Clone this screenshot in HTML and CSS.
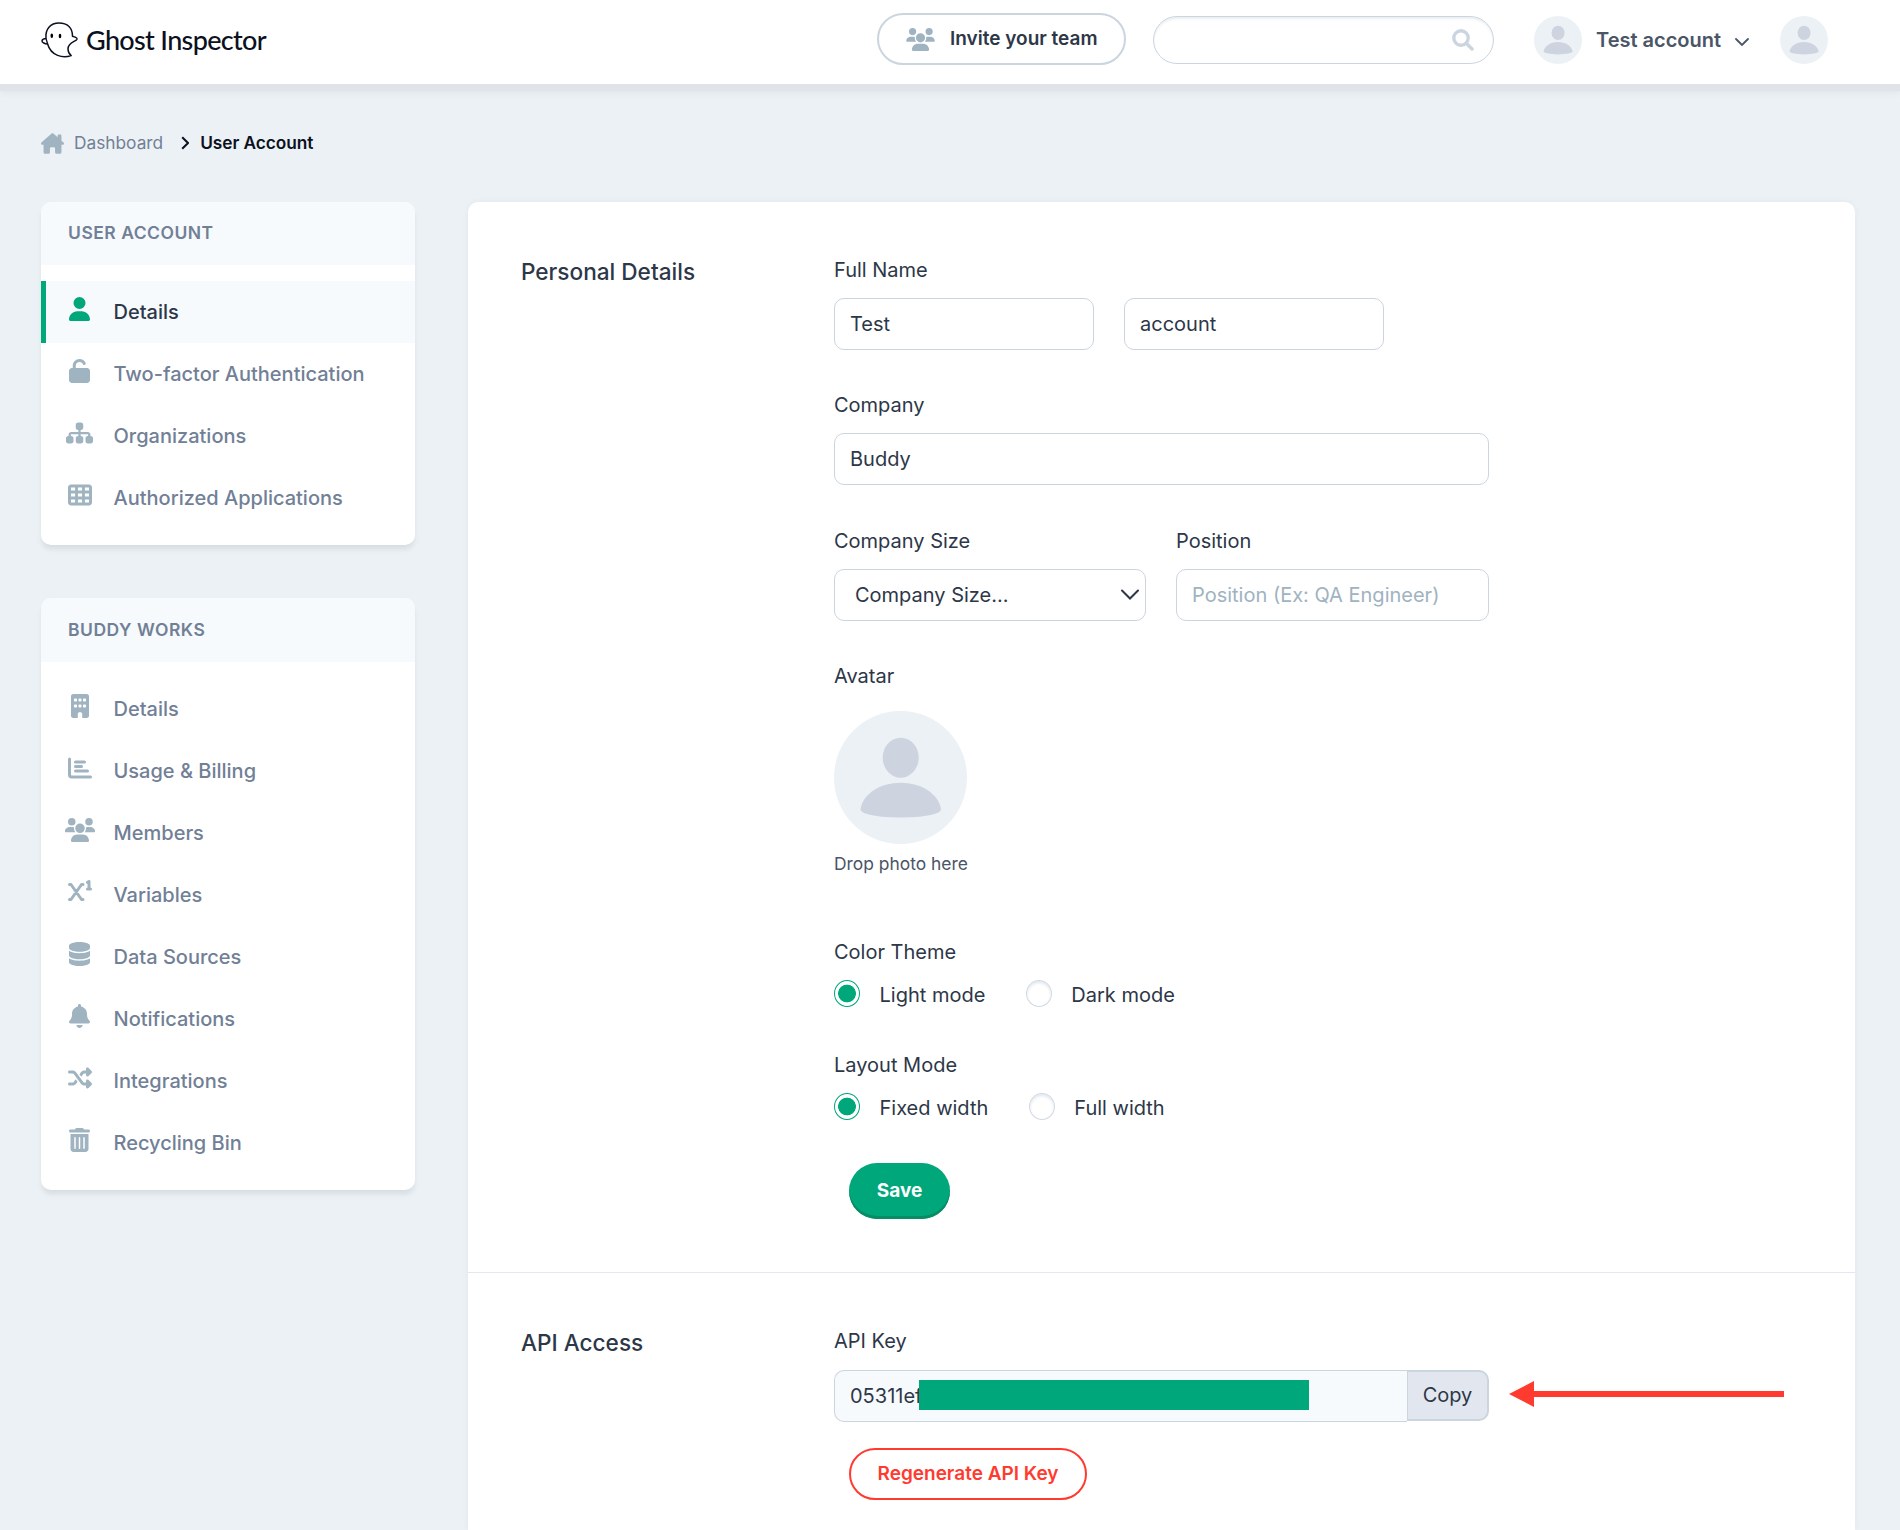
FILE: index.html
```html
<!DOCTYPE html>
<html lang="en">
<head>
    <meta charset="utf-8">
    <title>User Account - Ghost Inspector</title>
    <link rel="stylesheet" href="styles.css">
</head>
<body>
    <!-- shared icons -->
    <svg class="sprite" width="0" height="0">
        <symbol id="icon-users" viewBox="0 0 640 512">
            <path d="M144 0a80 80 0 1 1 0 160A80 80 0 1 1 144 0zM512 0a80 80 0 1 1 0 160A80 80 0 1 1 512 0zM0 282C0 232 47.8 192 106.7 192h42.7c15.9 0 31 3.5 44.6 9.7c-1.3 7.2-1.9 14.7-1.9 22.3c0 32 12 60 30 80H16C7 304 0 294 0 282zM418 304c18-20 30-48 30-80c0-7.6-.7-15-1.9-22.3c13.6-6.3 28.7-9.7 44.6-9.7h42.7C592.2 192 640 232 640 282c0 12-7 22-16 22H418zM218 219a102 102 0 1 1 204 0 102 102 0 1 1 -204 0zM128 485.3C128 411.7 187.7 352 261.3 352H378.7C452.3 352 512 411.7 512 485.3c0 14.7-11.9 26.7-26.7 26.7H154.7c-14.7 0-26.7-11.9-26.7-26.7z"/>
        </symbol>
        <symbol id="icon-avatar" viewBox="0 0 133 133">
            <circle class="avatar-bg" cx="66.5" cy="66.5" r="66.5"/>
            <ellipse class="avatar-fg" cx="66.7" cy="46.7" rx="18" ry="20"/>
            <path class="avatar-fg" d="M26.5 98C29 83 46 71.7 66.7 71.7S104.5 83 107 98C107.5 103.500 88 106.500 66.700 106.500S26 103.500 26.500 98z"/>
        </symbol>
    </svg>

    <header class="topbar">
        <a class="logo" href="#">
            <svg class="ghost" viewBox="0 0 40 40">
                <path d="M6 18.500C5 9 10.500 3 19 3c8.500 0 13.600 5 13.500 13.200 2 .6 5 1.600 4.500 3C36 21.700 28 22 28 29c0 3 .7 4.600 3.200 6.500C23 38.500 11 36 7.600 24 5 23.800 1.700 22.500 2 20.800c.2-1.500 2.500-2.200 4-2.300z" fill="#fff" stroke="#0b1120" stroke-width="1.500" stroke-linejoin="round"/>
                <path d="M6 18.500l1.700 5.700" stroke="#0b1120" stroke-width="1.300" fill="none"/>
                <ellipse cx="11.800" cy="15.700" rx="1.300" ry="2.200"/>
                <ellipse cx="20" cy="16" rx="1.300" ry="2.200"/>
            </svg>
            <span>Ghost Inspector</span>
        </a>
        <button class="invite">
            <svg viewBox="0 0 640 512"><use href="#icon-users"/></svg>
            Invite your team
        </button>
        <div class="search">
            <svg viewBox="0 0 22 22"><circle cx="9" cy="9" r="7.200"/><path d="M14.300 14.300l5.700 5.700"/></svg>
        </div>
        <div class="account">
            <svg class="avatar-sm" viewBox="0 0 133 133"><use href="#icon-avatar"/></svg>
            <span>Test account</span>
            <svg class="caret" viewBox="0 0 14 8"><path d="M1 1l6 6 6-6"/></svg>
        </div>
        <svg class="avatar-sm" viewBox="0 0 133 133"><use href="#icon-avatar"/></svg>
    </header>

    <nav class="breadcrumb">
        <svg class="home" viewBox="0 0 576 512"><path d="M575.800 255.500c0 18-15 32.100-32 32.100h-32l.7 160.200V472c0 22.100-17.900 40-40 40H392c-22.100 0-40-17.900-40-40V384c0-17.700-14.300-32-32-32H256c-17.700 0-32 14.300-32 32v88c0 22.100-17.900 40-40 40H104c-22.100 0-40-17.900-40-40V287.600H32c-18 0-32-14-32-32.100c0-9 3-17 10-24L266.400 8c7-7 15-8 22-8s15 2 21 7L416 100.700V64c0-17.700 14.300-32 32-32h32c17.700 0 32 14.300 32 32V185l52.800 46.400c8 7 12 15 11 24z"/></svg>
        <a href="#">Dashboard</a>
        <svg class="sep" viewBox="0 0 8 14"><path d="M1.200 1.200L7 7l-5.800 5.800"/></svg>
        <strong>User Account</strong>
    </nav>

    <div class="layout">
        <aside class="sidebar">
            <div class="menu">
                <h2>User Account</h2>
                <ul>
                    <li class="active"><span class="icon"><svg viewBox="0 0 448 512"><path d="M224 256A128 128 0 1 0 224 0a128 128 0 1 0 0 256zm-45.700 48C79.800 304 0 383.800 0 482.300C0 498.700 13.300 512 29.700 512H418.300c16.400 0 29.700-13.300 29.700-29.700C448 383.800 368.200 304 269.700 304H178.300z"/></svg></span>Details</li>
                    <li><span class="icon"><svg viewBox="0 0 448 512"><path d="M144 144c0-44.200 35.800-80 80-80c31.900 0 59.400 18.600 72.300 45.700c7.600 16 26.700 22.800 42.600 15.200s22.800-26.700 15.200-42.600C331 33.700 281.500 0 224 0C144.500 0 80 64.500 80 144v48H64c-35.300 0-64 28.700-64 64V448c0 35.300 28.700 64 64 64H384c35.300 0 64-28.700 64-64V256c0-35.300-28.700-64-64-64H144V144z"/></svg></span>Two-factor Authentication</li>
                    <li><span class="icon"><svg viewBox="0 0 576 512"><path d="M208 80c0-26.500 21.500-48 48-48h64c26.500 0 48 21.500 48 48v64c0 26.500-21.500 48-48 48h-8v40H464c30.900 0 56 25.100 56 56v32h8c26.500 0 48 21.500 48 48v64c0 26.500-21.500 48-48 48H464c-26.500 0-48-21.500-48-48V368c0-26.500 21.500-48 48-48h8V288c0-4.400-3.600-8-8-8H312v40h8c26.500 0 48 21.500 48 48v64c0 26.500-21.500 48-48 48H256c-26.500 0-48-21.500-48-48V368c0-26.500 21.500-48 48-48h8V280H112c-4.400 0-8 3.600-8 8v32h8c26.500 0 48 21.500 48 48v64c0 26.500-21.500 48-48 48H48c-26.500 0-48-21.500-48-48V368c0-26.500 21.500-48 48-48h8V288c0-30.900 25.100-56 56-56H264V192h-8c-26.500 0-48-21.500-48-48V80z"/></svg></span>Organizations</li>
                    <li><span class="icon"><svg viewBox="0 0 512 512"><path fill-rule="evenodd" d="M64 32h384c35 0 64 29 64 64v320c0 35-29 64-64 64H64c-35 0-64-29-64-64V96c0-35 29-64 64-64zM64 96v64h88V96zM212 96v64h88V96zM360 96v64h88V96zM64 224v64h88v-64zM212 224v64h88v-64zM360 224v64h88v-64zM64 352v64h88v-64zM212 352v64h88v-64zM360 352v64h88v-64z"/></svg></span>Authorized Applications</li>
                </ul>
            </div>

            <div class="menu">
                <h2>Buddy Works</h2>
                <ul>
                    <li><span class="icon"><svg viewBox="0 0 384 512"><path fill-rule="evenodd" d="M48 0h288c26.500 0 48 21.500 48 48v416c0 26.500-21.500 48-48 48h-96v-80c0-26.500-21.500-48-48-48s-48 21.500-48 48v80H48c-26.500 0-48-21.500-48-48V48C0 21.500 21.500 0 48 0zM80 96c-9 0-16 7-16 16v32c0 9 7 16 16 16h32c9 0 16-7 16-16v-32c0-9-7-16-16-16zM176 96c-9 0-16 7-16 16v32c0 9 7 16 16 16h32c9 0 16-7 16-16v-32c0-9-7-16-16-16zM272 96c-9 0-16 7-16 16v32c0 9 7 16 16 16h32c9 0 16-7 16-16v-32c0-9-7-16-16-16zM80 224c-9 0-16 7-16 16v32c0 9 7 16 16 16h32c9 0 16-7 16-16v-32c0-9-7-16-16-16zM176 224c-9 0-16 7-16 16v32c0 9 7 16 16 16h32c9 0 16-7 16-16v-32c0-9-7-16-16-16zM272 224c-9 0-16 7-16 16v32c0 9 7 16 16 16h32c9 0 16-7 16-16v-32c0-9-7-16-16-16z"/></svg></span>Details</li>
                    <li><span class="icon"><svg viewBox="0 0 512 512"><path class="line" d="M32 64v336c0 26 22 48 48 48h400M160 128h192M160 224h128M160 320h256"/></svg></span>Usage &amp; Billing</li>
                    <li><span class="icon"><svg viewBox="0 0 640 512"><use href="#icon-users"/></svg></span>Members</li>
                    <li><span class="icon"><svg viewBox="0 0 512 512"><path class="line" d="M32 96h32l224 320h32M320 96h-32L64 416H32M416 48l32-16v160M416 192h64"/></svg></span>Variables</li>
                    <li><span class="icon"><svg viewBox="0 0 448 512"><path d="M448 80v48c0 44.200-100.300 80-224 80S0 172.200 0 128V80C0 35.800 100.300 0 224 0S448 35.800 448 80zM393.200 214.700c20.800-7.400 39.900-16.900 54.800-28.600V288c0 44.200-100.300 80-224 80S0 332.200 0 288V186.100c14.900 11.800 34 21.200 54.800 28.600C99.700 230.700 159.500 240 224 240s124.300-9.300 169.200-25.300zM0 346.100c14.900 11.800 34 21.200 54.800 28.600C99.700 390.700 159.500 400 224 400s124.300-9.300 169.200-25.300c20.800-7.400 39.900-16.900 54.800-28.600V432c0 44.200-100.300 80-224 80S0 476.200 0 432V346.100z"/></svg></span>Data Sources</li>
                    <li><span class="icon"><svg viewBox="0 0 448 512"><path d="M224 0c-17.700 0-32 14.300-32 32V51.200C119 66 64 130.600 64 208v18.800c0 47-17.300 92.400-48.500 127.600l-7.400 8.300c-8.400 9.400-10.400 22.900-5.300 34.400S19.400 416 32 416H416c12.600 0 24-7.400 29.200-18.900s3.100-25-5.300-34.400l-7.400-8.300C401.300 319.200 384 273.900 384 226.800V208c0-77.400-55-142-128-156.800V32c0-17.700-14.300-32-32-32zm45.300 493.300c12-12 18.700-28.300 18.700-45.300H224 160c0 17 6.700 33.300 18.700 45.300s28.300 18.700 45.300 18.700s33.300-6.700 45.300-18.700z"/></svg></span>Notifications</li>
                    <li><span class="icon"><svg viewBox="0 0 512 512"><path d="M403.800 34.400c12-5 25.700-2.200 34.900 6.900l64 64c6 6 9.400 14.100 9.400 22.600s-3.400 16.600-9.400 22.600l-64 64c-9.200 9.200-22.900 11.900-34.900 6.900s-19.800-16.600-19.800-29.600V160H352c-10.100 0-19.600 4.700-25.600 12.800L284 229.300 244 176l31.200-41.600C293.300 110.200 321.800 96 352 96h32V64c0-12.900 7.800-24.600 19.800-29.600zM164 282.700L204 336l-31.200 41.600C154.700 401.800 126.200 416 96 416H32c-17.700 0-32-14.300-32-32s14.300-32 32-32H96c10.100 0 19.600-4.700 25.600-12.800L164 282.700zm274.600 188c-9.200 9.200-22.900 11.900-34.900 6.900s-19.800-16.600-19.800-29.600V416H352c-30.200 0-58.700-14.200-76.800-38.400L121.600 172.800c-6-8.100-15.500-12.800-25.600-12.800H32c-17.700 0-32-14.300-32-32s14.300-32 32-32H96c30.200 0 58.700 14.200 76.800 38.400L326.400 339.200c6 8.100 15.500 12.800 25.600 12.800h32V320c0-12.900 7.800-24.600 19.800-29.600s25.700-2.200 34.900 6.900l64 64c6 6 9.400 14.100 9.400 22.600s-3.400 16.600-9.400 22.600l-64 64z"/></svg></span>Integrations</li>
                    <li><span class="icon"><svg viewBox="0 0 448 512"><path d="M135.200 17.700C140.600 6.800 151.700 0 163.800 0H284.200c12.100 0 23.200 6.800 28.600 17.700L320 32h96c17.700 0 32 14.300 32 32s-14.300 32-32 32H32C14.300 96 0 81.700 0 64S14.300 32 32 32h96l7.200-14.300zM32 128H416V448c0 35.300-28.700 64-64 64H96c-35.300 0-64-28.700-64-64V128zm96 64c-8.800 0-16 7.200-16 16V432c0 8.800 7.200 16 16 16s16-7.200 16-16V208c0-8.800-7.200-16-16-16zm96 0c-8.800 0-16 7.200-16 16V432c0 8.800 7.200 16 16 16s16-7.200 16-16V208c0-8.800-7.200-16-16-16zm96 0c-8.800 0-16 7.200-16 16V432c0 8.800 7.200 16 16 16s16-7.200 16-16V208c0-8.800-7.200-16-16-16z"/></svg></span>Recycling Bin</li>
                </ul>
            </div>
        </aside>

        <main class="panel">
            <section>
                <h3>Personal Details</h3>
                <div class="fields">
                    <div class="group">
                        <label>Full Name</label>
                        <div class="row">
                            <input class="name" type="text" value="Test">
                            <input class="name" type="text" value="account">
                        </div>
                    </div>
                    <div class="group">
                        <label>Company</label>
                        <div class="row"><input type="text" value="Buddy"></div>
                    </div>
                    <div class="group row">
                        <div class="col size">
                            <label>Company Size</label>
                            <div class="select">
                                <span>Company Size...</span>
                                <svg viewBox="0 0 18 11"><path d="M1 1.500l8 8 8-8"/></svg>
                            </div>
                        </div>
                        <div class="col">
                            <label>Position</label>
                            <input type="text" placeholder="Position (Ex: QA Engineer)">
                        </div>
                    </div>
                    <div class="group avatar">
                        <label>Avatar</label>
                        <svg viewBox="0 0 133 133"><use href="#icon-avatar"/></svg>
                        <p>Drop photo here</p>
                    </div>
                    <div class="group radios">
                        <label>Color Theme</label>
                        <div class="options">
                            <span class="radio checked"></span><span class="option">Light mode</span>
                            <span class="radio"></span><span class="option">Dark mode</span>
                        </div>
                    </div>
                    <div class="group radios">
                        <label>Layout Mode</label>
                        <div class="options">
                            <span class="radio checked"></span><span class="option">Fixed width</span>
                            <span class="radio"></span><span class="option">Full width</span>
                        </div>
                    </div>
                    <button class="save">Save</button>
                </div>
            </section>

            <section class="api">
                <h3>API Access</h3>
                <div class="fields">
                    <label>API Key</label>
                    <div class="key">
                        <div class="key-value">05311ef<span class="redacted"></span></div>
                        <button class="copy">Copy</button>
                        <svg class="arrow" viewBox="0 0 275 26"><path d="M0 13L25 0v26zM24 10h251v6H24z"/></svg>
                    </div>
                    <button class="regenerate">Regenerate API Key</button>
                </div>
            </section>
        </main>
    </div>
</body>
</html>
```
FILE: styles.css
```css
* { box-sizing: border-box; }
body {
    margin: 0;
    background: #ecf1f5;
    color: #2d3748;
    font-family: Inter, "Liberation Sans", sans-serif;
    font-size: 20px;
    line-height: 24px;
}
h2, h3, p, ul { margin: 0; padding: 0; }
a { color: inherit; text-decoration: none; }
svg { display: block; flex: none; }
button, input { font: inherit; color: inherit; }
.sprite { position: absolute; }

/* top bar */
.topbar {
    display: flex;
    align-items: center;
    height: 84px;
    padding: 0 72px 4px 40px;
    background: #fff;
    box-shadow: 0 7px 1px #e0e4e9, 0 8px 8px rgba(45, 55, 72, 0.07);
}
.logo {
    display: flex;
    align-items: center;
    width: 837px;
    color: #0b1120;
    font-family: Lato, sans-serif;
    font-size: 27px;
    font-weight: 500;
}
.logo span { margin-left: 6px; white-space: nowrap; letter-spacing: -0.67px; }
.ghost { width: 40px; height: 40px; }
.invite {
    display: flex;
    align-items: center;
    width: 249px;
    height: 52px;
    margin-right: 27px;
    margin-top: -2px;
    padding: 0 0 0 27px;
    border: 2px solid #cbd5e0;
    border-radius: 26px;
    background: #fff;
    font-size: 19px;
    font-weight: 600;
    white-space: nowrap;
}
.invite svg { width: 29px; height: 23px; margin-right: 15px; fill: #a0b3c0; }
.search {
    display: flex;
    align-items: center;
    justify-content: flex-end;
    width: 341px;
    height: 48px;
    padding-right: 19px;
    border: 1px solid #cbd5e0;
    border-radius: 24px;
    box-shadow: inset 0 2px 2px rgba(160, 179, 192, 0.2);
}
.search svg { width: 22px; height: 22px; fill: none; stroke: #cbd5e0; stroke-width: 3.4; stroke-linecap: round; }
.account { display: flex; align-items: center; width: 246px; margin-left: 40px; color: #4a5568; font-weight: 600; }
.account span { margin: 0 14px; white-space: nowrap; }
.avatar-sm { width: 48px; height: 48px; }
.avatar-bg { fill: #ecf1f6; }
.avatar-fg { fill: #cdd4e0; }
.caret { width: 14px; height: 8px; margin-top: 4px; fill: none; stroke: #4a5568; stroke-width: 1.8; stroke-linecap: round; }

/* breadcrumb */
.breadcrumb { display: flex; align-items: center; height: 24px; margin: 47px 0 47px 41px; font-size: 17.3px; color: #718096; }
.home { width: 23px; height: 21px; margin-right: 10px; fill: #a0b3c0; }
.sep { width: 8px; height: 14px; margin: 0 11px 0 18px; fill: none; stroke: #0b1120; stroke-width: 2; }
.breadcrumb strong { color: #0b1120; font-weight: 600; letter-spacing: -0.05px; }

.layout { display: flex; align-items: flex-start; gap: 53px; margin: 0 45px 0 41px; }

/* side menus */
.sidebar { width: 374px; }
.menu {
    margin-bottom: 53px;
    border-radius: 10px;
    background: #fff;
    box-shadow: 0 5px 4px -1px rgba(45, 55, 72, 0.07), 0 5px 8px rgba(45, 55, 72, 0.03);
    overflow: hidden;
}
.menu h2 {
    height: 63px;
    padding: 19px 27px 0;
    background: #f6fafd;
    color: #718096;
    font-size: 17.5px;
    font-weight: 600;
    letter-spacing: 0.5px;
    text-transform: uppercase;
}
.menu + .menu { margin-bottom: 0; }
.menu + .menu h2 { height: 64px; padding-top: 20px; }
.menu ul { padding: 16px 0; list-style: none; }
.menu li { display: flex; align-items: center; height: 62px; padding-left: 23px; color: #718096; font-weight: 500; }
.menu .active { padding-left: 18px; border-left: 5px solid #00a77a; background: #f6fafd; color: #2d3748; }
.icon { display: flex; justify-content: center; width: 31px; margin: 0 18.5px 6px 0; fill: #a0b3c0; }
.icon svg { height: 24px; }
.active .icon { fill: #00a77a; }
.line { fill: none; stroke: #a0b3c0; stroke-width: 64; stroke-linecap: round; stroke-linejoin: round; }

/* form panel */
.panel { flex: 1; border-radius: 10px 10px 0 0; background: #fff; box-shadow: 0 0 6px rgba(45, 55, 72, 0.05); }
section { display: flex; padding: 56px 0 53px 53px; }
section + section { height: 258px; padding-bottom: 0; border-top: 1px solid #e2e8f0; }
h3 { width: 313px; padding-top: 2px; font-size: 22.6px; font-weight: 500; }
.fields { width: 655px; }
label { display: block; margin-bottom: 16px; }
.group { margin-bottom: 43.4px; }
.row { display: flex; gap: 30px; }
.col { flex: 1; }
.size { flex: none; width: 312px; }
input, .select {
    display: block;
    width: 100%;
    height: 52px;
    padding: 0 15px;
    border: 1px solid #cbd5e0;
    border-radius: 10px;
    background: #fff;
}
input.name { width: 260px; }
input::placeholder { color: #a0b3c0; opacity: 1; }
.select { display: flex; align-items: center; justify-content: space-between; padding: 0 6px 0 20px; }
.select svg { width: 18px; height: 11px; fill: none; stroke: #2d3748; stroke-width: 2; stroke-linecap: round; }
.avatar { margin-bottom: 64px; }
.avatar label { margin-bottom: 22.8px; }
.avatar svg { width: 133px; height: 133px; }
.avatar p { margin-top: 8px; color: #4a5568; font-size: 17.4px; white-space: nowrap; }
.radios { margin-bottom: 46px; }
.options { display: flex; height: 27px; }
.radio { width: 26px; height: 27px; border: 1px solid #d3d9e4; border-radius: 50%; box-shadow: inset 0 2px 3px rgba(160, 179, 192, 0.3); }
.radio.checked { border-color: #00a77a; background: radial-gradient(circle, #00a77a 8.5px, #fff 9.2px); box-shadow: none; }
.option { margin: 3px 40.5px 0 19.5px; }
.save {
    display: block;
    width: 101px;
    height: 56px;
    margin: -3px 0 0 15px;
    padding: 0;
    border: 0;
    border-radius: 28px;
    background: #00a77a;
    box-shadow: inset 0 -3px 0 #078c66;
    color: #fff;
    font-size: 19px;
    font-weight: 700;
}

/* api key */
.api label { margin-bottom: 17px; }
.key { position: relative; display: flex; }
.key-value {
    position: relative;
    width: 573px;
    height: 52px;
    padding: 13px 15px;
    border: 1px solid #cbd5e0;
    border-right: 0;
    border-radius: 10px 0 0 10px;
    background: #f6fafd;
}
.redacted { position: absolute; left: 84px; top: 9px; width: 390px; height: 30px; background: #00a77a; }
.copy {
    width: 83px;
    height: 51px;
    margin-left: -1px;
    padding: 0;
    border: 2px solid #cbd5e0;
    border-radius: 0 10px 10px 0;
    background: #e2e7ef;
}
.arrow { position: absolute; left: 675px; top: 11px; width: 275px; height: 26px; fill: #ff3b30; }
.regenerate {
    display: block;
    width: 238px;
    height: 52px;
    margin: 26px 0 0 15px;
    padding: 1px 0 0;
    border: 2px solid #ff3b30;
    border-radius: 26px;
    background: #fff;
    color: #ff3b30;
    font-size: 19px;
    font-weight: 600;
}
```
